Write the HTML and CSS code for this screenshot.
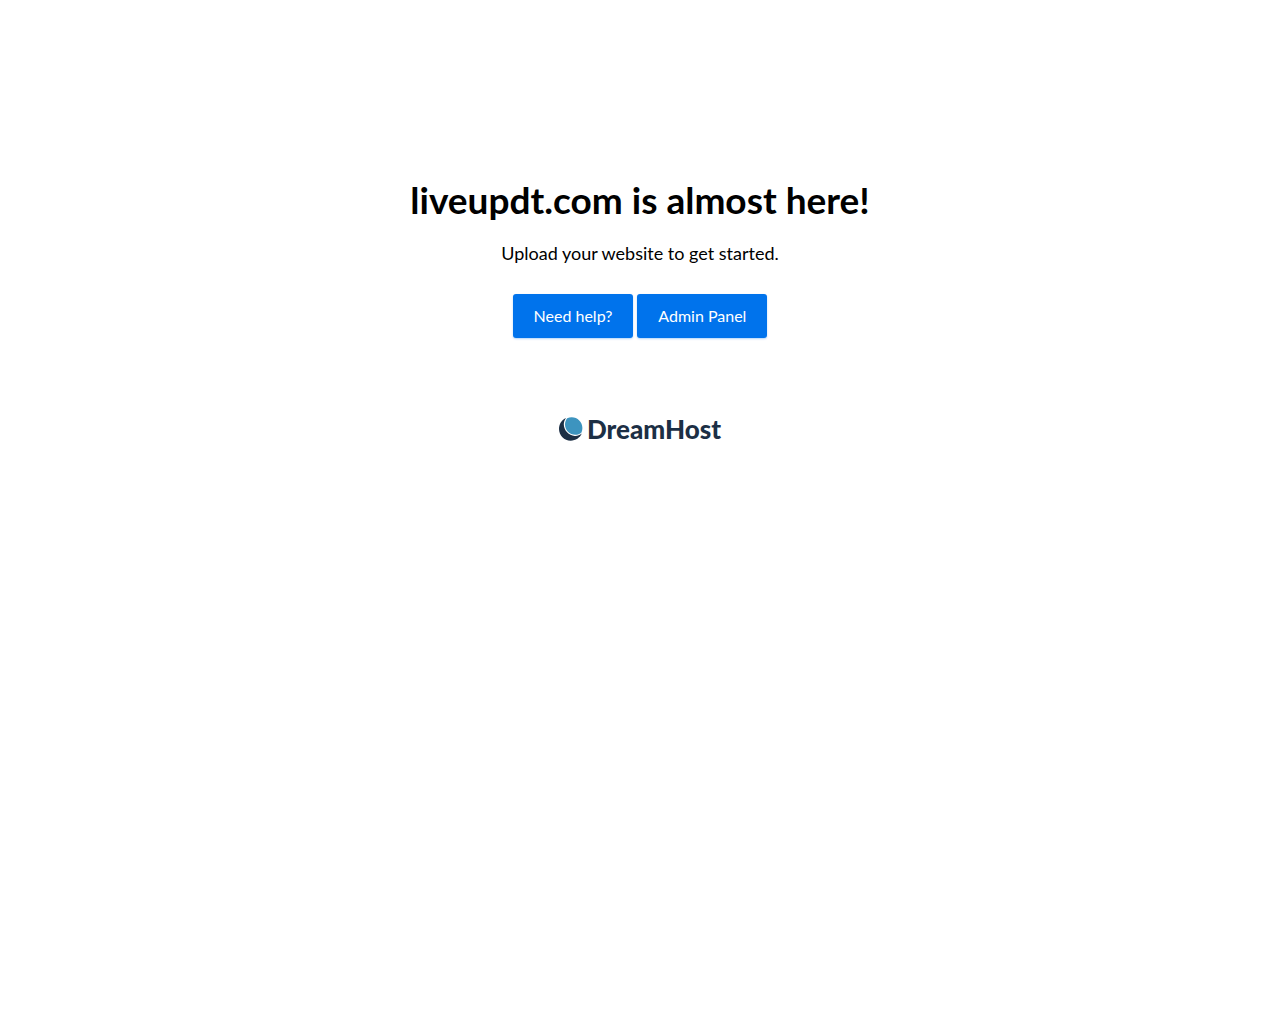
FILE: index.html
```html
<!DOCTYPE html>
<html lang="en">
  <head>
    <meta charset="UTF-8" />
    <meta name="viewport" content="width=device-width, initial-scale=1.0" />
    <title>liveupdt.com is almost here!</title>

    <link rel="stylesheet" href="styles.css">
  </head>
  <body>
    <main class="page">
      <h1 class="title">liveupdt.com is almost here!</h1>
      <p class="lead">Upload your website to get started.</p>

      <div class="actions">
        <a class="btn" href="#help">Need help?</a>
        <a class="btn" href="#panel">Admin Panel</a>
      </div>

      <a class="logo" href="#home">
        <svg class="logo-mark" viewBox="0 0 24 24" aria-hidden="true">
          <path fill="#1c2f45" d="M7 1C2.800 2.800 0 7 0 12c0 6.500 5.200 11.700 11.700 11.700 5 0 9.300-2.900 11.100-7.100-2.100 1.700-4.600 2.500-7.100 2.300C9.800 18.600 5 13.600 4.800 7.500 4.800 5 5.600 2.800 7 1z" />
          <path fill="#3d94bf" d="M8.200 1.200C9.600.6 11.100.3 12.700.3c5.900 0 10.700 4.800 10.700 10.700 0 1.600-.3 3.100-.9 4.400-1.600 1.500-3.800 2.400-6.200 2.400-5.700 0-10.300-4.600-10.300-10.300 0-2.400.8-4.600 2.200-6.300z" />
        </svg>
        <span class="logo-name">DreamHost</span>
      </a>
    </main>
  </body>
</html>
```

FILE: styles.css
```css
body {
  margin: 0;
  background-color: #fff;
  color: #000;
  font-family: "Lato", sans-serif;
}

.page {
  display: flex;
  flex-direction: column;
  align-items: center;
  padding: 178px 20px 40px;
  text-align: center;
}

.title {
  margin: 0 0 20px;
  font-size: 37px;
  line-height: 44px;
  font-weight: bold;
}

.lead {
  margin: 0 0 30px;
  font-size: 18px;
  line-height: 22px;
}

.actions {
  display: flex;
  flex-wrap: wrap;
  justify-content: center;
  gap: 4px;
}

.btn {
  padding: 12px 21px;
  border-radius: 3px;
  background-color: #0073ec;
  box-shadow: 0 1px 2px rgba(0, 115, 236, 0.3);
  color: #fff;
  font-size: 16px;
  line-height: 20px;
  text-decoration: none;
}

.btn:hover {
  background-color: #0061c7;
}

.logo {
  display: flex;
  align-items: center;
  gap: 4px;
  margin-top: 76px;
  color: #1c2f45;
  text-decoration: none;
}

.logo-mark {
  width: 24px;
  height: 24px;
}

.logo-name {
  font-size: 26px;
  line-height: 30px;
  font-weight: 900;
}
```
